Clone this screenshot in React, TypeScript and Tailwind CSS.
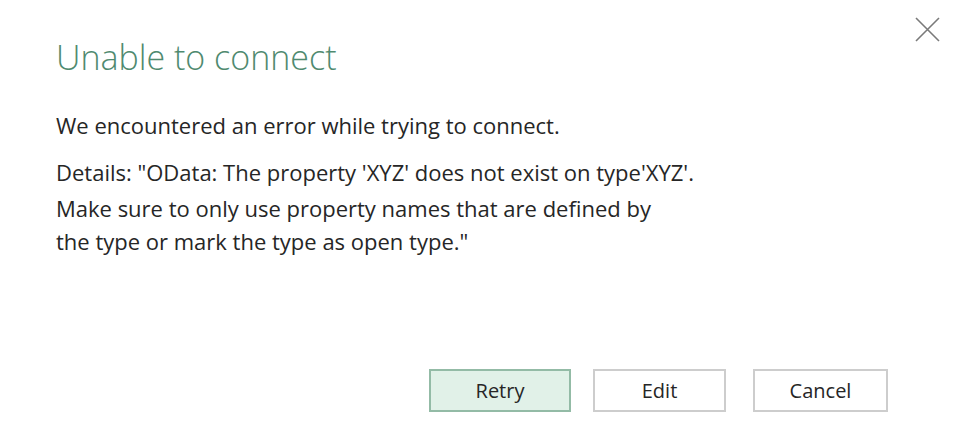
import React from "react";

export default function App() {
  return (
    <div
      className="w-[953px] h-[447px] bg-white flex flex-col text-[#262626]"
      style={{ fontFamily: '"Open Sans", "Noto Sans", sans-serif' }}
    >
      <div className="flex items-start justify-between pl-[56px] pr-[13px]">
        <h1 className="mt-[37px] text-[34px] leading-[40px] font-light text-[#4f8a6f]">
          Unable to connect
        </h1>
        <svg
          className="mt-[17px]"
          width="25"
          height="25"
          viewBox="0 0 25 25"
          fill="none"
          stroke="#7a7a7a"
          strokeWidth="1.6"
        >
          <path d="M1 1 L24 24 M24 1 L1 24" />
        </svg>
      </div>

      <div className="pl-[56px] text-[22px]">
        <p className="mt-[32px] leading-[33px]">
          We encountered an error while trying to connect.
        </p>
        <div className="mt-[14px]">
          <p className="leading-[33px]">
            Details: "OData: The property 'XYZ' does not exist on type'XYZ'.
          </p>
          <p className="mt-[3px] leading-[33px]">
            Make sure to only use property names that are defined by
          </p>
          <p className="leading-[32px]">the type or mark the type as open type."</p>
        </div>
      </div>

      <div className="mt-auto pb-[35px] pr-[65px] flex justify-end text-[20px]">
        <button className="w-[142px] h-[43px] border-2 border-[#93bba6] bg-[#e1f1e8] text-[#262626]">
          Retry
        </button>
        <button className="ml-[22px] w-[133px] h-[43px] border-2 border-[#cdcdcd] bg-white text-[#262626]">
          Edit
        </button>
        <button className="ml-[27px] w-[135px] h-[43px] border-2 border-[#cdcdcd] bg-white text-[#262626]">
          Cancel
        </button>
      </div>
    </div>
  );
}
